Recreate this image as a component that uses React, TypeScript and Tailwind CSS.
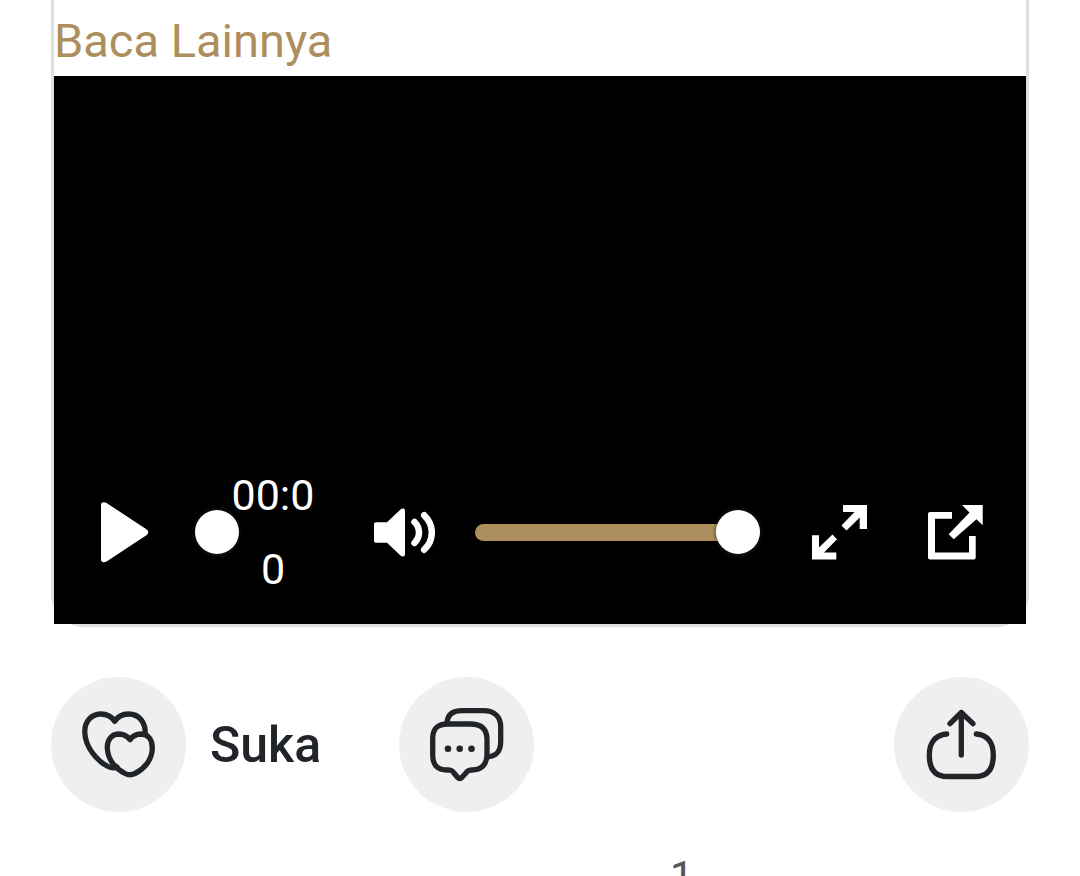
import { useState } from "react";
import type { ReactNode } from "react";

function PlayIcon() {
  return (
    <svg viewBox="0 0 48 61" className="h-[61px] w-12" fill="currentColor" aria-hidden="true">
      <path d="M-.4 4C-.4 .6 2.600-.8 5.600 1L45.400 27.200C47.800 28.900 47.800 31.500 45.400 33.200L5.600 59.500C2.600 61.300-.4 59.900-.4 56.500Z" />
    </svg>
  );
}

function VolumeIcon() {
  return (
    <svg viewBox="0 0 61 60" className="h-[60px] w-[61px]" aria-hidden="true">
      <path
        fill="currentColor"
        d="M2 20.300H13L26.500 7.500C28 6 31 6 31 9V52C31 55 28 55 26.500 53.500L13 40.700H2C.7 40.700 0 40 0 38.700V22.300C0 21 .7 20.300 2 20.300Z"
      />
      <g fill="none" stroke="currentColor" strokeWidth="6.500" strokeLinecap="round">
        <path d="M40.500 20Q45 24.500 45 30.500T40.500 41" />
        <path d="M50.200 13.300Q57.800 20.500 57.800 30.500T50.200 47.700" />
      </g>
    </svg>
  );
}

function ExpandIcon() {
  return (
    <svg viewBox="0 0 55 55" className="size-[55px]" fill="currentColor" aria-hidden="true">
      <path d="M31 0H55V24H47.700V12.500L34.500 25.500L29.500 20.500L42.500 7H31Z" />
      <path d="M24.300 54.500H0V30.300H7V42.500L20.500 29.500L25 34.200L12 47.500H24.300Z" />
    </svg>
  );
}

function PopOutIcon() {
  return (
    <svg viewBox="0 0 55 55" className="size-[55px]" fill="currentColor" aria-hidden="true">
      <path d="M2 7H24V13.700H7V47.500H41V31H47.700V52.500Q47.700 54.500 45.700 54.500H2Q0 54.500 0 52.500V9Q0 7 2 7Z" />
      <path d="M34 0H54.700V20.300L48.500 14.300L25.700 34.200L20.700 29.300L41.500 7.500Z" />
    </svg>
  );
}

interface RoundIconProps {
  children: ReactNode;
}

function RoundIcon({ children }: RoundIconProps) {
  return (
    <span className="block size-[135px] shrink-0 rounded-full bg-[#efefef]">
      <svg
        viewBox="0 0 135 135"
        className="size-full"
        fill="none"
        stroke="currentColor"
        strokeWidth="5.300"
        strokeLinecap="round"
        strokeLinejoin="round"
        aria-hidden="true"
      >
        {children}
      </svg>
    </span>
  );
}

interface RangeProps {
  label: string;
  value: number;
  onChange: (value: number) => void;
  className: string;
}

function Range({ label, value, onChange, className }: RangeProps) {
  return (
    <input
      type="range"
      min={0}
      max={100}
      aria-label={label}
      value={value}
      onChange={(e) => onChange(Number(e.target.value))}
      className={`block h-[17px] appearance-none rounded-full [&::-webkit-slider-thumb]:size-11 [&::-webkit-slider-thumb]:appearance-none [&::-webkit-slider-thumb]:rounded-full [&::-webkit-slider-thumb]:bg-white [&::-webkit-slider-thumb]:shadow-[0_3px_3px_rgba(35,40,47,0.15),0_0_0_3px_rgba(35,40,47,0.2)] ${className}`}
    />
  );
}

function VideoPlayer() {
  const [position, setPosition] = useState(0);
  const [volume, setVolume] = useState(100);

  return (
    <div className="flex h-[548px] flex-col justify-end bg-black pr-[43px] pb-[18px] pl-[47px] text-white">
      <div className="flex items-center">
        <button type="button" aria-label="Putar">
          <PlayIcon />
        </button>
        <Range label="Posisi" value={position} onChange={setPosition} className="ml-[46px] w-11 bg-transparent" />
        <time className="-mr-1 -ml-3 w-[92px] text-center text-[43px] leading-[74px] break-all">00:00</time>
        <button type="button" aria-label="Bisukan" className="ml-[59px]">
          <VolumeIcon />
        </button>
        <Range label="Volume" value={volume} onChange={setVolume} className="ml-10 min-w-0 flex-1 bg-[#ad8e5d]" />
        <button type="button" aria-label="Layar penuh" className="ml-[52px]">
          <ExpandIcon />
        </button>
        <button type="button" aria-label="Buka di jendela baru" className="ml-[61px]">
          <PopOutIcon />
        </button>
      </div>
    </div>
  );
}

function PostActions() {
  return (
    <div className="mt-[50px] flex items-center text-[#212529]">
      <button type="button" className="flex items-center gap-6 text-[50px] leading-none font-medium">
        <RoundIcon>
          <path d="M94.300 57C94.500 45 88 37 77.500 37C72 37 67 39 63.700 44.300C60.500 39 55 37 49.500 37C40 37.200 33.500 45 33.800 55C34 70 46 84 57 89.500C60 91 63 91.500 66 90" />
          <path d="M79 62.700C76 58.500 72 57 67.500 57C60.500 57.200 56 63 56.300 71C56.800 84 66 92.500 74 96.500C77.500 98.200 80.500 98.200 84 96.500C93 92 101.300 83 101.300 71C101.300 63 97.500 57.200 90 57C86 57 82 58.500 79 62.700Z" />
        </RoundIcon>
        Suka
      </button>
      <button type="button" aria-label="Komentar" className="ml-[78px]">
        <RoundIcon>
          <path d="M33.700 62C33.700 51 38.500 47 49 47H71C83 47 88 52.500 88 63V77C88 88 82 93 73 93C69 93 68.500 94 67 96L63 100.300C61.500 101.800 60 101.800 58.500 100.300L54.500 95.500C53 93.500 52.500 93 49 93C38 93 33.700 88 33.700 78Z" />
          <path d="M48 46C48.500 37.500 54 33.700 63 33.700H84C96 33.700 101.700 40 101.700 50V64C101.700 74 98 79 89 79.800" />
          <g fill="currentColor" stroke="none">
            <circle cx="49" cy="71.700" r="3.300" />
            <circle cx="60.700" cy="71.700" r="3.300" />
            <circle cx="72.500" cy="71.700" r="3.300" />
          </g>
        </RoundIcon>
      </button>
      <button type="button" aria-label="Bagikan" className="ml-auto">
        <RoundIcon>
          <path d="M67.300 78V35.500M56 46.700L67.300 35.500L79 46.700" />
          <path d="M52.700 57C41 58 35.300 66 35.300 78C35.300 93 42 99.500 53 99.500H81.500C93 99.500 99.300 93 99.300 78C99.300 66 94 58 82.300 57" />
        </RoundIcon>
      </button>
    </div>
  );
}

export default function App() {
  return (
    <main className="h-screen overflow-hidden bg-white px-[51px] font-[Roboto,sans-serif]">
      <article className="rounded-b-[33px] border-3 border-t-0 border-[#e0e0e0] pt-1.5">
        <a href="#lainnya" className="block text-[47px] leading-[70px] text-[#ad8e5d]">
          Baca Lainnya
        </a>
        <VideoPlayer />
      </article>
      <PostActions />
      <p className="mt-10 ml-[619px] text-[42px] leading-[50px] text-[#555555]">1</p>
    </main>
  );
}
